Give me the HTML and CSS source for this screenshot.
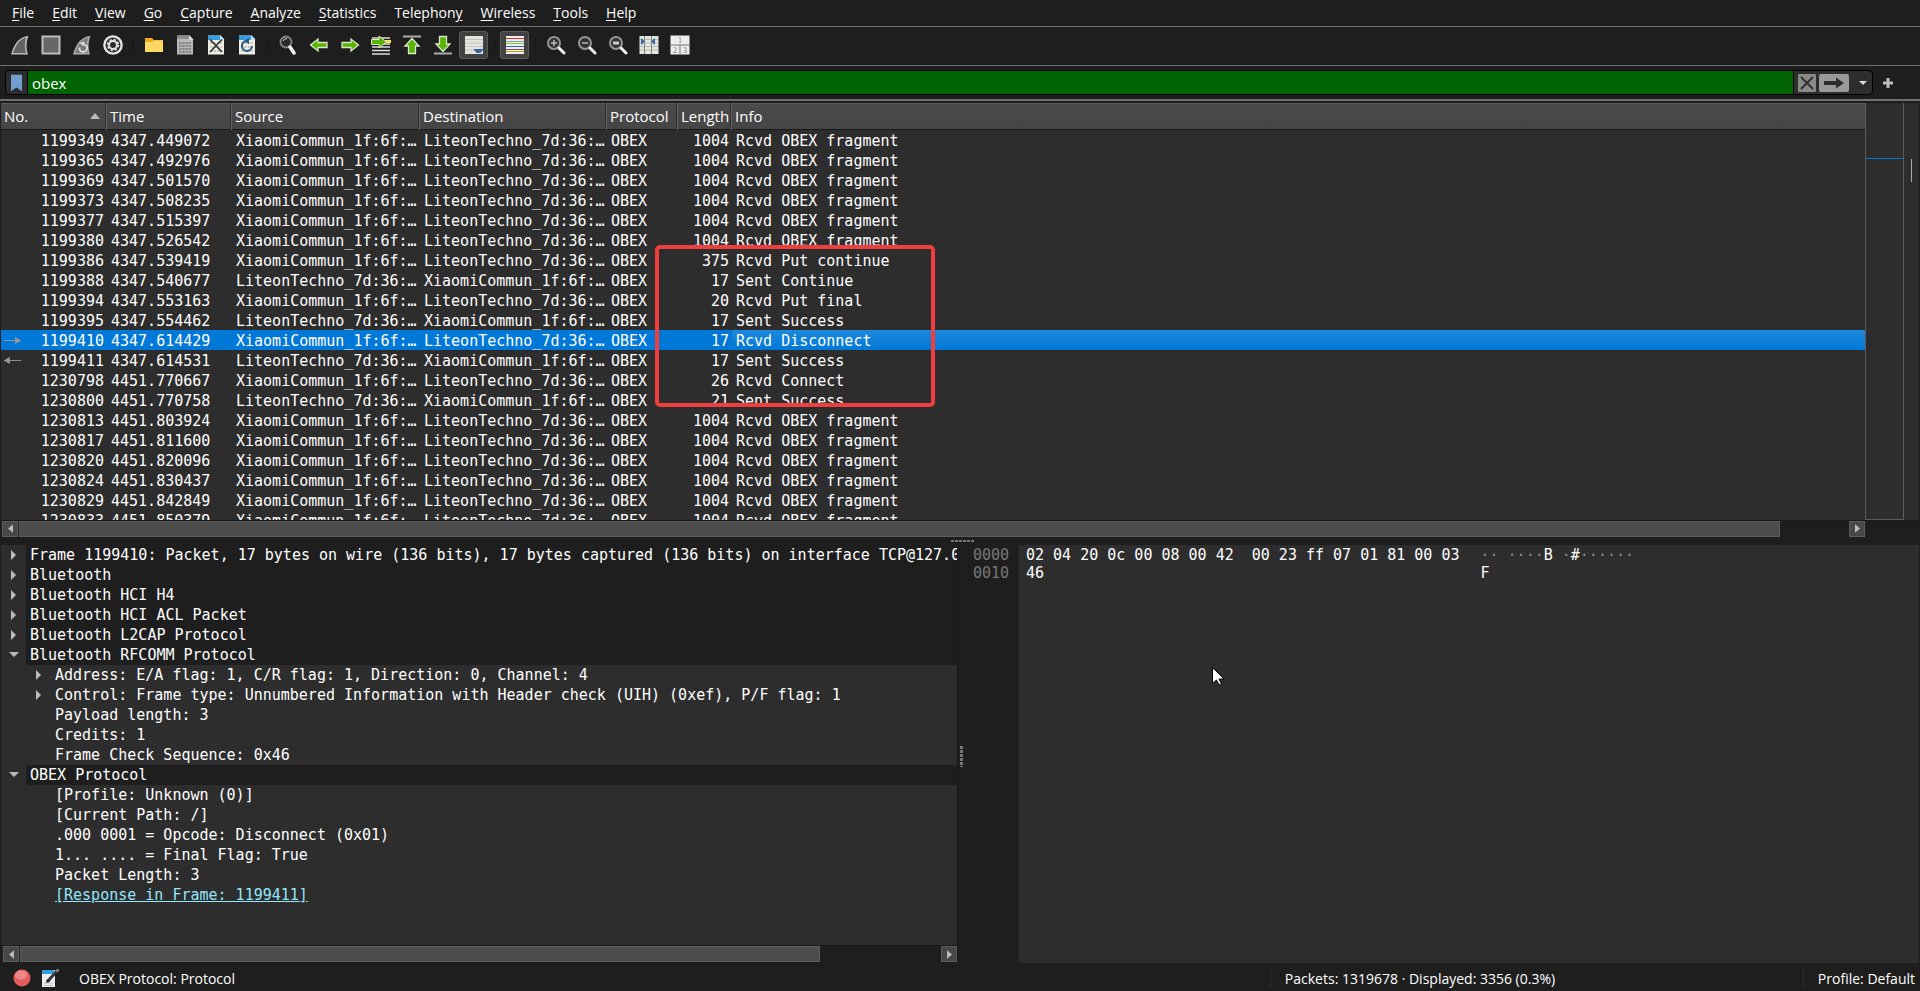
FILE: index.html
```html
<!DOCTYPE html>
<html lang="en">
  <head>
    <meta charset="UTF-8" />
    <meta name="viewport" content="width=device-width, initial-scale=1.0" />
    <title>Packet Capture</title>
    <link rel="stylesheet" href="styles.css">
  </head>
  <body>
    <!-- Menu bar -->
    <nav class="menubar">
      <button><u>F</u>ile</button>
      <button><u>E</u>dit</button>
      <button><u>V</u>iew</button>
      <button><u>G</u>o</button>
      <button><u>C</u>apture</button>
      <button><u>A</u>nalyze</button>
      <button><u>S</u>tatistics</button>
      <button>Telephon<u>y</u></button>
      <button><u>W</u>ireless</button>
      <button><u>T</u>ools</button>
      <button><u>H</u>elp</button>
    </nav>

    <!-- Toolbar -->
    <div class="toolbar">
      <button aria-label="Start capture">
        <svg viewBox="0 0 20 20"><path d="M1 19.500C4 9 9 2 18.500.8C16 7 16 14 18 19.500Z" fill="#bdbdbd"/><path d="M3 18C6 9.500 9.500 4.500 16 2.500C14.500 8 14.500 13 16 18Z" fill="#626262"/></svg>
      </button>
      <button aria-label="Stop capture">
        <svg viewBox="0 0 20 20"><rect x="1.500" y="1.500" width="17" height="17" fill="#666" stroke="#bdbdbd" stroke-width="2"/></svg>
      </button>
      <button aria-label="Restart capture">
        <svg viewBox="0 0 20 20"><path d="M1 19.500C4 9 9 2 18.500.8C16 7 16 14 18 19.500Z" fill="#adadad"/><path d="M3 18C6 9.500 9.500 4.500 16 2.500C14.500 8 14.500 13 16 18Z" fill="#7b7b7b"/><path d="M7.500 12.500a3.800 3.800 0 1 0 5-3" fill="none" stroke="#ddd" stroke-width="1.800"/><path d="M7.500 8l5-1.500v5z" fill="#ddd"/></svg>
      </button>
      <button aria-label="Capture options">
        <svg viewBox="0 0 20 20"><circle cx="10" cy="10" r="9.800" fill="#e6e6e6"/><circle cx="10" cy="10" r="7.500" fill="#2b2b2b"/><circle cx="10" cy="10" r="4" fill="none" stroke="#e6e6e6" stroke-width="2"/><circle cx="10" cy="10" r="5.500" fill="none" stroke="#e6e6e6" stroke-width="1.500" stroke-dasharray="2.200 2.120"/></svg>
      </button>
      <span class="separator"></span>
      <button aria-label="Open file">
        <svg viewBox="0 0 20 20"><path d="M1 3h7l2 2h9v12H1z" fill="#f0a91e"/><path d="M1 7h7l2-1.500h9V17H1z" fill="#ffd764"/></svg>
      </button>
      <button aria-label="Save file">
        <svg viewBox="0 0 20 20"><path d="M2 .500h12.500L18 4v15.500H2z" fill="#b9b9b9"/><path d="M2 .500h12v3.500H2z" fill="#8c8c8c"/><path d="M14 0v5h4.500z" fill="#dedede"/><path d="M4 8h12M4 11h12M4 14h12M4 17h12" stroke="#888" stroke-width="1.800" stroke-dasharray="2.500 .700"/></svg>
      </button>
      <button aria-label="Close file">
        <svg viewBox="0 0 20 20"><path d="M2 .500h12.500L18 4v15.500H2z" fill="#efeee3"/><path d="M2 .500h12V5H2z" fill="#359ddd"/><path d="M14 0v5h4.500z" fill="#bbe5fa"/><path d="M4 8h12M4 12h12M4 16h12" stroke="#c5c5bd" stroke-width="2" stroke-dasharray="2.500 1"/><path d="M4 4.500L16 17M16 4.500L4 17" stroke="#30343b" stroke-width="1.800"/></svg>
      </button>
      <button aria-label="Reload file">
        <svg viewBox="0 0 20 20"><path d="M2 .500h12.500L18 4v15.500H2z" fill="#efeee3"/><path d="M2 .500h12V5H2z" fill="#359ddd"/><path d="M14 0v5h4.500z" fill="#bbe5fa"/><path d="M4 8h12M4 12h12M4 16h12" stroke="#c5c5bd" stroke-width="2" stroke-dasharray="2.500 1"/><path d="M9 6a5 5 0 1 0 6 5" fill="none" stroke="#28558f" stroke-width="2"/><path d="M7 6l5-3v6z" fill="#28558f"/></svg>
      </button>
      <span class="separator"></span>
      <button aria-label="Find packet">
        <svg viewBox="0 0 20 20"><circle cx="8" cy="7" r="5.500" fill="#292929" stroke="#858585" stroke-width="1.800"/><path d="M5 6q1-2.500 4-2.500" fill="none" stroke="#ddd"/><path d="M12 12l4 6" stroke="#efefef" stroke-width="3.500" stroke-linecap="round"/></svg>
      </button>
      <button aria-label="Previous packet">
        <svg viewBox="0 0 20 20"><path d="M1.500 10L9 4v3.500h9v5H9V16z" fill="#57b500" stroke="#d9e8d0" stroke-width="1.300"/></svg>
      </button>
      <button aria-label="Next packet">
        <svg viewBox="0 0 20 20"><path d="M18.500 10L11 4v3.500H2v5h9V16z" fill="#57b500" stroke="#d9e8d0" stroke-width="1.300"/></svg>
      </button>
      <button aria-label="Go to packet">
        <svg viewBox="0 0 20 20"><path d="M1 3h18M1 9h18M1 12h18M1 15.500h18M1 19h18" stroke="#ddd" stroke-width="1.500"/><path d="M14 6.500h6" stroke="#ffe14c" stroke-width="3"/><path d="M15.500 7L8 1v3.500H.500v5H8V13z" fill="#57b500" stroke="#d9e8d0"/></svg>
      </button>
      <button aria-label="First packet">
        <svg viewBox="0 0 20 20"><path d="M1 1.500h18" stroke="#aaa" stroke-width="2"/><path d="M10 3.500L3 11h3.500v7.500h7V11H17z" fill="#57b500" stroke="#d9e8d0" stroke-width="1.300"/></svg>
      </button>
      <button aria-label="Last packet">
        <svg viewBox="0 0 20 20"><path d="M1 18.500h18" stroke="#aaa" stroke-width="2"/><path d="M10 16.500L3 9h3.500V1.500h7V9H17z" fill="#57b500" stroke="#d9e8d0" stroke-width="1.300"/></svg>
      </button>
      <button class="pressed" aria-label="Auto scroll" aria-pressed="true">
        <svg viewBox="0 0 20 20"><path d="M1 1h18v18H1z" fill="#e4e5df"/><path d="M1 4.500h18M1 8h18M1 11.500h18M1 15h18" stroke="#c3c4bd"/><path d="M9.500 14h10l-3 4h-4z" fill="#3465a4"/></svg>
      </button>
      <span class="separator"></span>
      <button class="pressed" aria-label="Colorize packets" aria-pressed="true">
        <svg viewBox="0 0 20 20"><path d="M1 1h18v18H1z" fill="#eee"/><path d="M1 3.500h18" stroke="#ef2929"/><path d="M1 6.500h18" stroke="#729fcf"/><path d="M1 8.500h18" stroke="#73d216"/><path d="M1 11.500h18" stroke="#3465a4"/><path d="M1 14.500h18" stroke="#75507b"/><path d="M1 16.500h18" stroke="#c4a000"/></svg>
      </button>
      <span class="separator"></span>
      <button aria-label="Zoom in">
        <svg viewBox="0 0 20 20"><circle cx="8" cy="8" r="6" fill="#333" stroke="#969696" stroke-width="2"/><path d="M5 8h6M8 5v6" stroke="#bbb" stroke-width="1.500"/><path d="M13 13l5 5" stroke="#eee" stroke-width="3" stroke-linecap="round"/></svg>
      </button>
      <button aria-label="Zoom out">
        <svg viewBox="0 0 20 20"><circle cx="8" cy="8" r="6" fill="#333" stroke="#969696" stroke-width="2"/><path d="M5 8h6" stroke="#bbb" stroke-width="1.500"/><path d="M13 13l5 5" stroke="#eee" stroke-width="3" stroke-linecap="round"/></svg>
      </button>
      <button aria-label="Normal size">
        <svg viewBox="0 0 20 20"><circle cx="8" cy="8" r="6" fill="#333" stroke="#969696" stroke-width="2"/><path d="M5 8h6" stroke="#ccc" stroke-width="3"/><path d="M13 13l5 5" stroke="#eee" stroke-width="3" stroke-linecap="round"/></svg>
      </button>
      <button aria-label="Resize columns">
        <svg viewBox="0 0 20 20"><path d="M.500 1h19v18H.500z" fill="#e4e5df"/><path d="M1 4.500h18M1 8h18M1 11.500h18M1 15h18" stroke="#bcbdb7"/><path d="M5.500 1v18M12.500 1v18" stroke="#80827d"/><path d="M2 3l4 3.500L2 10zM16 3l-4 3.500 4 3.500z" fill="#3465a4"/></svg>
      </button>
      <button aria-label="Pane layout">
        <svg viewBox="0 0 20 20"><path d="M.500.500h19v19H.500z" fill="#eee"/><path d="M0 10h20M10 10v10" stroke="#999" stroke-width="1.500"/><g class="pane-number"><text x="8" y="8">1</text><text x="3" y="18">2</text><text x="13" y="18">3</text></g></svg>
      </button>
    </div>

    <!-- Display filter -->
    <div class="filter-bar">
      <div class="filter-box">
        <button class="bookmark" aria-label="Filter bookmarks">
          <svg viewBox="0 0 12 18"><path d="M0 0h12v18l-6-4-6 4z" fill="#729fcf"/></svg>
        </button>
        <input class="filter-input" type="text" value="obex" aria-label="Display filter" />
        <button class="clear-filter" aria-label="Clear filter">
          <svg viewBox="0 0 18 18"><rect width="18" height="18" rx="1" fill="#888a85"/><path d="M3 3l12 12M15 3L3 15" stroke="#2d2d2d" stroke-width="1.800"/></svg>
        </button>
        <button class="apply-filter" aria-label="Apply filter">
          <svg viewBox="0 0 30 18"><rect width="30" height="18" rx="2" fill="#999"/><path d="M5 7h12V3.500L25 9l-8 5.500V11H5z" fill="#2d2d2d"/></svg>
        </button>
        <button class="filter-history" aria-label="Filter history">
          <svg viewBox="0 0 8 4"><path d="M0 0h8L4 4z" fill="#ddd"/></svg>
        </button>
      </div>
      <button class="add-filter" aria-label="Add filter button">
        <svg viewBox="0 0 10 10"><path d="M5 0v10M0 5h10" stroke="#bbb" stroke-width="3"/></svg>
      </button>
    </div>

    <!-- Packet list -->
    <section class="packet-pane">
      <div class="packet-area">
        <div class="packet-view">
          <table class="packet-list">
            <colgroup>
              <col class="col-no" /><col class="col-time" /><col class="col-source" /><col class="col-destination" /><col class="col-protocol" /><col class="col-length" /><col />
            </colgroup>
            <thead>
              <tr><th class="sorted">No.</th><th>Time</th><th>Source</th><th>Destination</th><th>Protocol</th><th>Length</th><th>Info</th></tr>
            </thead>
            <tbody>
              <tr><td>1199349</td><td>4347.449072</td><td>XiaomiCommun_1f:6f:…</td><td>LiteonTechno_7d:36:…</td><td>OBEX</td><td>1004</td><td>Rcvd OBEX fragment</td></tr>
              <tr><td>1199365</td><td>4347.492976</td><td>XiaomiCommun_1f:6f:…</td><td>LiteonTechno_7d:36:…</td><td>OBEX</td><td>1004</td><td>Rcvd OBEX fragment</td></tr>
              <tr><td>1199369</td><td>4347.501570</td><td>XiaomiCommun_1f:6f:…</td><td>LiteonTechno_7d:36:…</td><td>OBEX</td><td>1004</td><td>Rcvd OBEX fragment</td></tr>
              <tr><td>1199373</td><td>4347.508235</td><td>XiaomiCommun_1f:6f:…</td><td>LiteonTechno_7d:36:…</td><td>OBEX</td><td>1004</td><td>Rcvd OBEX fragment</td></tr>
              <tr><td>1199377</td><td>4347.515397</td><td>XiaomiCommun_1f:6f:…</td><td>LiteonTechno_7d:36:…</td><td>OBEX</td><td>1004</td><td>Rcvd OBEX fragment</td></tr>
              <tr><td>1199380</td><td>4347.526542</td><td>XiaomiCommun_1f:6f:…</td><td>LiteonTechno_7d:36:…</td><td>OBEX</td><td>1004</td><td>Rcvd OBEX fragment</td></tr>
              <tr><td>1199386</td><td>4347.539419</td><td>XiaomiCommun_1f:6f:…</td><td>LiteonTechno_7d:36:…</td><td>OBEX</td><td>375</td><td>Rcvd Put continue</td></tr>
              <tr><td>1199388</td><td>4347.540677</td><td>LiteonTechno_7d:36:…</td><td>XiaomiCommun_1f:6f:…</td><td>OBEX</td><td>17</td><td>Sent Continue</td></tr>
              <tr><td>1199394</td><td>4347.553163</td><td>XiaomiCommun_1f:6f:…</td><td>LiteonTechno_7d:36:…</td><td>OBEX</td><td>20</td><td>Rcvd Put final</td></tr>
              <tr><td>1199395</td><td>4347.554462</td><td>LiteonTechno_7d:36:…</td><td>XiaomiCommun_1f:6f:…</td><td>OBEX</td><td>17</td><td>Sent Success</td></tr>
              <tr class="selected"><td><svg class="related" viewBox="0 0 20 8"><path d="M0 4h14" stroke="#999"/><path d="M13 0l7 4-7 4z" fill="#999"/></svg>1199410</td><td>4347.614429</td><td>XiaomiCommun_1f:6f:…</td><td>LiteonTechno_7d:36:…</td><td>OBEX</td><td>17</td><td>Rcvd Disconnect</td></tr>
              <tr><td><svg class="related" viewBox="0 0 20 8"><path d="M6 4h14" stroke="#999"/><path d="M7 0L0 4l7 4z" fill="#999"/></svg>1199411</td><td>4347.614531</td><td>LiteonTechno_7d:36:…</td><td>XiaomiCommun_1f:6f:…</td><td>OBEX</td><td>17</td><td>Sent Success</td></tr>
              <tr><td>1230798</td><td>4451.770667</td><td>XiaomiCommun_1f:6f:…</td><td>LiteonTechno_7d:36:…</td><td>OBEX</td><td>26</td><td>Rcvd Connect</td></tr>
              <tr><td>1230800</td><td>4451.770758</td><td>LiteonTechno_7d:36:…</td><td>XiaomiCommun_1f:6f:…</td><td>OBEX</td><td>21</td><td>Sent Success</td></tr>
              <tr><td>1230813</td><td>4451.803924</td><td>XiaomiCommun_1f:6f:…</td><td>LiteonTechno_7d:36:…</td><td>OBEX</td><td>1004</td><td>Rcvd OBEX fragment</td></tr>
              <tr><td>1230817</td><td>4451.811600</td><td>XiaomiCommun_1f:6f:…</td><td>LiteonTechno_7d:36:…</td><td>OBEX</td><td>1004</td><td>Rcvd OBEX fragment</td></tr>
              <tr><td>1230820</td><td>4451.820096</td><td>XiaomiCommun_1f:6f:…</td><td>LiteonTechno_7d:36:…</td><td>OBEX</td><td>1004</td><td>Rcvd OBEX fragment</td></tr>
              <tr><td>1230824</td><td>4451.830437</td><td>XiaomiCommun_1f:6f:…</td><td>LiteonTechno_7d:36:…</td><td>OBEX</td><td>1004</td><td>Rcvd OBEX fragment</td></tr>
              <tr><td>1230829</td><td>4451.842849</td><td>XiaomiCommun_1f:6f:…</td><td>LiteonTechno_7d:36:…</td><td>OBEX</td><td>1004</td><td>Rcvd OBEX fragment</td></tr>
              <tr><td>1230833</td><td>4451.850379</td><td>XiaomiCommun_1f:6f:…</td><td>LiteonTechno_7d:36:…</td><td>OBEX</td><td>1004</td><td>Rcvd OBEX fragment</td></tr>
            </tbody>
          </table>
          <div class="annotation"></div>
        </div>
        <div class="minimap"><div class="minimap-mark"></div></div>
        <div class="vscroll"><div class="vscroll-thumb"></div></div>
      </div>
      <div class="hscroll packet-scroll">
        <button aria-label="Scroll left"><svg viewBox="0 0 6 10"><path d="M6 0v10L0 5z" fill="#bbb"/></svg></button>
        <div class="track"><div class="thumb"></div></div>
        <button aria-label="Scroll right"><svg viewBox="0 0 6 10"><path d="M0 0v10l6-5z" fill="#bbb"/></svg></button>
      </div>
    </section>

    <div class="splitter-row"><span></span></div>

    <!-- Details and bytes -->
    <div class="lower-panes">
      <section class="details-pane">
        <div class="tree">
          <div class="node root"><button class="arrow" aria-label="Expand"></button><p>Frame 1199410: Packet, 17 bytes on wire (136 bits), 17 bytes captured (136 bits) on interface TCP@127.0.</p></div>
          <div class="node root"><button class="arrow" aria-label="Expand"></button><p>Bluetooth</p></div>
          <div class="node root"><button class="arrow" aria-label="Expand"></button><p>Bluetooth HCI H4</p></div>
          <div class="node root"><button class="arrow" aria-label="Expand"></button><p>Bluetooth HCI ACL Packet</p></div>
          <div class="node root"><button class="arrow" aria-label="Expand"></button><p>Bluetooth L2CAP Protocol</p></div>
          <div class="node root"><button class="arrow open" aria-label="Collapse"></button><p>Bluetooth RFCOMM Protocol</p></div>
          <div class="node child"><button class="arrow" aria-label="Expand"></button><p>Address: E/A flag: 1, C/R flag: 1, Direction: 0, Channel: 4</p></div>
          <div class="node child"><button class="arrow" aria-label="Expand"></button><p>Control: Frame type: Unnumbered Information with Header check (UIH) (0xef), P/F flag: 1</p></div>
          <div class="node leaf"><p>Payload length: 3</p></div>
          <div class="node leaf"><p>Credits: 1</p></div>
          <div class="node leaf"><p>Frame Check Sequence: 0x46</p></div>
          <div class="node root"><button class="arrow open" aria-label="Collapse"></button><p>OBEX Protocol</p></div>
          <div class="node leaf"><p>[Profile: Unknown (0)]</p></div>
          <div class="node leaf"><p>[Current Path: /]</p></div>
          <div class="node leaf"><p>.000 0001 = Opcode: Disconnect (0x01)</p></div>
          <div class="node leaf"><p>1... .... = Final Flag: True</p></div>
          <div class="node leaf"><p>Packet Length: 3</p></div>
          <div class="node leaf"><p><a href="#">[Response in Frame: 1199411]</a></p></div>
        </div>
        <div class="hscroll details-scroll">
          <button aria-label="Scroll left"><svg viewBox="0 0 6 10"><path d="M6 0v10L0 5z" fill="#bbb"/></svg></button>
          <div class="track"><div class="thumb"></div></div>
          <button aria-label="Scroll right"><svg viewBox="0 0 6 10"><path d="M0 0v10l6-5z" fill="#bbb"/></svg></button>
        </div>
      </section>

      <section class="bytes-pane">
        <div class="offsets">
          <span class="splitter-col"></span>
          <pre>0000
0010</pre>
        </div>
        <div class="bytes">
          <pre class="hex">02 04 20 0c 00 08 00 42  00 23 ff 07 01 81 00 03
46</pre>
          <pre class="ascii"><i>··</i> <i>····</i>B <i>·</i>#<i>······</i>
F</pre>
          <svg class="cursor" viewBox="0 0 12 19"><path d="M.500.500v16l4-3.500 2.500 5 2.500-1-2.500-5h5z" fill="#fff" stroke="#000"/></svg>
        </div>
      </section>
    </div>

    <!-- Status bar -->
    <footer class="statusbar">
      <button aria-label="Expert information">
        <svg viewBox="0 0 18 18"><circle cx="9" cy="9" r="8.500" fill="#e35d5d"/><ellipse cx="8" cy="6" rx="6" ry="4.500" fill="#ec8787"/></svg>
      </button>
      <button aria-label="Capture file comment">
        <svg viewBox="0 0 18 18"><path d="M1 1h13v17H1z" fill="#eee"/><path d="M1 1h12v4H1z" fill="#359ddd"/><path d="M3 14h9M3 16.500h9" stroke="#bbb"/><path d="M6.500 12.500L16 2" stroke="#30343b" stroke-width="3"/><path d="M15.500 2.500L17.500.500" stroke="#888" stroke-width="3"/><path d="M5 14l1-4 3 2.500z" fill="#222"/></svg>
      </button>
      <p class="status-field">OBEX Protocol: Protocol</p>
      <p class="status-packets">Packets: 1319678 · Displayed: 3356 (0.3%)</p>
      <p class="status-profile">Profile: Default</p>
    </footer>
  </body>
</html>
```
FILE: styles.css
```css
/* Reset and Base Styles */
* {
  margin: 0;
  padding: 0;
  box-sizing: border-box;
}

body {
  display: flex;
  flex-direction: column;
  height: 100vh;
  overflow: hidden;
  background: #1e1e1e;
  color: #fff;
  font-family: "Open Sans", "Noto Sans", sans-serif;
  font-size: 14px;
}

button {
  display: flex;
  align-items: center;
  justify-content: center;
  flex-shrink: 0;
  border: none;
  background: none;
  color: inherit;
  font: inherit;
}

svg {
  display: block;
}

pre,
td,
.tree {
  font-family: "DejaVu Sans Mono", "Liberation Mono", monospace;
  font-size: 15px;
}

/* Menu Bar */
.menubar {
  display: flex;
  height: 27px;
  padding: 0 3px 2px;
  border-bottom: 1px solid #707070;
}

.menubar button {
  padding: 0 9px;
}

.menubar u {
  text-underline-offset: 2px;
}

/* Toolbar */
.toolbar {
  display: flex;
  align-items: center;
  gap: 2px;
  height: 39px;
  padding: 0 5px 2px;
  border-bottom: 1px solid #707070;
}

.toolbar button {
  width: 29px;
  height: 28px;
}

.toolbar svg {
  width: 20px;
  height: 20px;
}

.toolbar .pressed {
  border: 1px solid #5c5c5c;
  border-radius: 3px;
  background: #424242;
}

.separator {
  width: 8px;
  height: 14px;
  background: linear-gradient(#151515, #151515) center / 1px 100% no-repeat;
}

.pane-number {
  fill: #777;
  font-family: "Liberation Serif", serif;
  font-size: 8px;
}

/* Display Filter */
.filter-bar {
  display: flex;
  align-items: center;
  height: 35px;
  padding: 0 27px 0 5px;
  border-bottom: 2px solid #707070;
}

.filter-box {
  display: flex;
  flex: 1;
  align-items: center;
  height: 25px;
  border: 1px solid #000;
  border-radius: 4px;
  background: #2d2d2d;
}

.bookmark {
  width: 21px;
}

.bookmark svg {
  width: 11px;
  height: 18px;
}

.filter-input {
  flex: 1;
  height: 23px;
  padding: 0 4px;
  border: solid #000;
  border-width: 0 1px;
  background: #006400;
  color: #fff;
  font: inherit;
  font-size: 15px;
}

.clear-filter {
  margin-left: 4px;
}

.clear-filter svg {
  width: 18px;
  height: 18px;
}

.apply-filter {
  margin-left: 3px;
}

.apply-filter svg {
  width: 30px;
  height: 18px;
}

.filter-history {
  width: 23px;
  padding-left: 4px;
}

.filter-history svg {
  width: 8px;
  height: 4px;
}

.add-filter {
  margin-left: 10px;
}

.add-filter svg {
  width: 10px;
  height: 10px;
}

/* Packet List */
.packet-pane {
  display: flex;
  flex: 436 1 0;
  flex-direction: column;
  min-height: 0;
  padding-top: 2px;
}

.packet-area {
  display: flex;
  flex: 1;
  min-height: 0;
  border-left: 1px solid #1e1e1e;
  border-right: 1px solid #1e1e1e;
  background: #2d2d2d;
}

.packet-view {
  position: relative;
  flex: 1;
  overflow: hidden;
}

.packet-list {
  width: 100%;
  border-collapse: separate;
  border-spacing: 0;
  table-layout: fixed;
}

.col-no {
  width: 106px;
}

.col-time {
  width: 125px;
}

.col-source {
  width: 188px;
}

.col-destination {
  width: 187px;
}

.col-protocol {
  width: 71px;
}

.col-length {
  width: 54px;
}

th {
  height: 27px;
  padding: 0 0 2px 3px;
  border-top: 1px solid #5c5c5c;
  border-bottom: 1px solid #1a1a1a;
  background: linear-gradient(#4b4b4b, #454545);
  box-shadow: -1px 0 #606060, -2px 0 #2f2f2f;
  font-size: 15px;
  font-weight: normal;
  line-height: 20px;
  text-align: left;
}

.sorted::after {
  content: "";
  float: right;
  margin: 7px 7px 0 0;
  border: 5px solid transparent;
  border-top: none;
  border-bottom: 6px solid #bbb;
}

td {
  position: relative;
  height: 20px;
  padding: 2px 4px 0;
  line-height: 18px;
  white-space: nowrap;
}

td:first-child,
td:nth-child(6) {
  padding-right: 3px;
  text-align: right;
}

.selected td {
  background: #0078d7;
}

.selected td:last-child {
  background: linear-gradient(#1c88dc, #0078d7);
}

.related {
  position: absolute;
  top: 7px;
  left: 2px;
  width: 19px;
  height: 7px;
}

.annotation {
  position: absolute;
  top: 142px;
  left: 654px;
  width: 280px;
  height: 162px;
  border: 4px solid #f03e3e;
  border-radius: 5px;
}

.minimap {
  width: 39px;
  border: 1px solid #5c5c5c;
  border-top: none;
}

.minimap-mark {
  height: 56px;
  border-bottom: 1px solid #0078d7;
}

.vscroll {
  width: 15px;
  padding: 56px 0 0 7px;
}

.vscroll-thumb {
  width: 1px;
  height: 23px;
  background: #aaa;
}

/* Horizontal Scrollbars */
.hscroll {
  display: flex;
  flex-shrink: 0;
  gap: 1px;
  height: 18px;
  padding: 0 0 1px 2px;
  border-top: 1px solid #191919;
}

.hscroll button {
  width: 16px;
  border: 1px solid #5c5c5c;
  background: #484848;
}

.hscroll svg {
  width: 5px;
  height: 9px;
}

.track {
  flex: 1;
}

.thumb {
  height: 100%;
  border: 1px solid #5c5c5c;
  background: #4d4d4d;
}

.packet-scroll {
  padding-right: 55px;
}

.packet-scroll .thumb {
  width: 96.3%;
}

.details-scroll .thumb {
  width: 87%;
}

/* Splitter Handles */
.splitter-row {
  display: flex;
  justify-content: center;
  height: 7px;
}

.splitter-row span {
  width: 23px;
  height: 2px;
  margin: 2px 0 0 4px;
  background: repeating-linear-gradient(90deg, #777 0 3px, transparent 3px 4px);
}

.splitter-col {
  position: absolute;
  top: 48%;
  left: 2px;
  width: 3px;
  height: 21px;
  background: repeating-linear-gradient(#777 0 3px, transparent 3px 4px);
}

/* Details and Bytes Panes */
.lower-panes {
  display: flex;
  flex: 419 1 0;
  min-height: 0;
}

.details-pane {
  display: flex;
  flex: 957 1 0;
  flex-direction: column;
  min-width: 0;
  border-left: 1px solid #1e1e1e;
  border-right: 1px solid #191919;
}

.tree {
  flex: 1;
  overflow: hidden;
  background: #2d2d2d;
}

.node {
  display: flex;
  height: 20px;
  line-height: 20px;
  white-space: nowrap;
}

.node p {
  overflow: hidden;
}

.root p {
  flex: 1;
  padding-left: 4px;
  background: #1e1e1e;
}

.child {
  padding-left: 25px;
}

.child p {
  padding-left: 4px;
}

.leaf {
  padding-left: 54px;
}

.arrow {
  width: 25px;
  height: 20px;
}

.arrow::before {
  content: "";
  border: 5px solid transparent;
  border-right: none;
  border-left-color: #bbb;
}

.arrow.open::before {
  border: 5px solid transparent;
  border-bottom: none;
  border-top-color: #bbb;
}

.node a {
  color: #93e6fa;
}

.bytes-pane {
  display: flex;
  flex: 963 1 0;
  min-width: 0;
}

.offsets {
  position: relative;
  width: 61px;
  padding: 1px 0 0 15px;
  color: #777;
}

.bytes {
  position: relative;
  display: flex;
  flex: 1;
  gap: 21px;
  margin-right: 1px;
  padding: 1px 7px;
  background: #2d2d2d;
}

pre {
  line-height: 18px;
}

.ascii i {
  color: #888;
  font-style: normal;
}

.cursor {
  position: absolute;
  top: 122px;
  left: 193px;
  width: 12px;
  height: 19px;
}

/* Status Bar */
.statusbar {
  display: flex;
  align-items: center;
  height: 28px;
  padding: 2px 5px 0 13px;
}

.statusbar button {
  width: 18px;
  margin-right: 10px;
}

.statusbar svg {
  width: 18px;
  height: 18px;
}

.status-field {
  flex: 1;
  padding-left: 10px;
}

.status-packets {
  width: 533px;
  padding-left: 14px;
}

.status-profile {
  padding-left: 14px;
}

.status-packets,
.status-profile {
  border-left: 1px solid #2d2d2d;
}
```
